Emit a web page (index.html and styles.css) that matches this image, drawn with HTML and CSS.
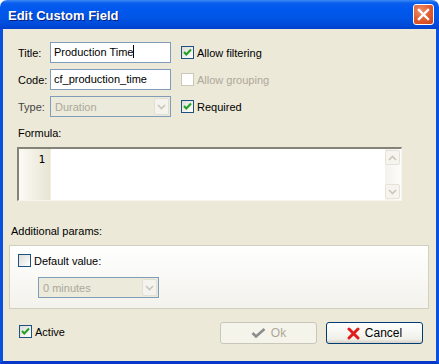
FILE: index.html
```html
<!DOCTYPE html>
<html lang="en">
<head>
    <meta charset="UTF-8">
    <title>Edit Custom Field</title>
    <link rel="stylesheet" href="styles.css">
</head>
<body>

<div class="window">
    <div class="titlebar">
        <span class="title">Edit Custom Field</span>
        <span class="close">
            <svg width="21" height="21" viewBox="0 0 21 21"><path d="M6 6 L15 15 M15 6 L6 15" stroke="#fff" stroke-width="2.4" stroke-linecap="square"/></svg>
        </span>
    </div>

    <div class="content">
        <div class="fields">
            <label>Title:</label>
            <div class="input">Production Time<span class="caret"></span></div>
            <div class="check">
                <span class="cb"><svg width="11" height="11" viewBox="0 0 11 11"><path d="M2 5 L4.3 7.5 L9 2.5" fill="none" stroke="#21A121" stroke-width="2"/></svg></span>
                <span>Allow filtering</span>
            </div>

            <label>Code:</label>
            <div class="input">cf_production_time</div>
            <div class="check disabled">
                <span class="cb"></span>
                <span>Allow grouping</span>
            </div>

            <label class="muted">Type:</label>
            <div class="select">
                <span>Duration</span>
                <span class="drop"><svg width="9" height="6" viewBox="0 0 9 6"><path d="M1 1 L4.5 4.5 L8 1" fill="none" stroke="#C9C7BA" stroke-width="1.6"/></svg></span>
            </div>
            <div class="check">
                <span class="cb"><svg width="11" height="11" viewBox="0 0 11 11"><path d="M2 5 L4.3 7.5 L9 2.5" fill="none" stroke="#21A121" stroke-width="2"/></svg></span>
                <span>Required</span>
            </div>
        </div>

        <div class="formula-label">Formula:</div>
        <div class="editor">
            <div class="gutter">1</div>
            <div class="code"></div>
            <div class="vscroll">
                <span class="sbtn"><svg width="9" height="6" viewBox="0 0 9 6"><path d="M1 5 L4.5 1.5 L8 5" fill="none" stroke="#C9C7BA" stroke-width="1.6"/></svg></span>
                <span class="sbtn"><svg width="9" height="6" viewBox="0 0 9 6"><path d="M1 1 L4.5 4.5 L8 1" fill="none" stroke="#C9C7BA" stroke-width="1.6"/></svg></span>
            </div>
        </div>

        <div class="params-label">Additional params:</div>
        <div class="params-box">
            <div class="check">
                <span class="cb"></span>
                <span>Default value:</span>
            </div>
            <div class="select small">
                <span>0 minutes</span>
                <span class="drop"><svg width="9" height="6" viewBox="0 0 9 6"><path d="M1 1 L4.5 4.5 L8 1" fill="none" stroke="#C9C7BA" stroke-width="1.6"/></svg></span>
            </div>
        </div>

        <div class="footer">
            <div class="check active">
                <span class="cb"><svg width="11" height="11" viewBox="0 0 11 11"><path d="M2 5 L4.3 7.5 L9 2.5" fill="none" stroke="#21A121" stroke-width="2"/></svg></span>
                <span>Active</span>
            </div>
            <div class="buttons">
                <div class="btn disabled">
                    <svg width="15" height="12" viewBox="0 0 15 12"><path d="M1.5 6 L5 9.5 L13.5 2" fill="none" stroke="#8C8C8C" stroke-width="2.6"/></svg>
                    <span>Ok</span>
                </div>
                <div class="btn">
                    <svg width="13" height="13" viewBox="0 0 13 13"><path d="M2 2 L11 11 M11 2 L2 11" stroke="#E11C1C" stroke-width="3" stroke-linecap="round"/></svg>
                    <span>Cancel</span>
                </div>
            </div>
        </div>
    </div>
</div>

</body>
</html>
```

FILE: styles.css
```css
html, body {
    margin: 0;
    padding: 0;
    background-color: #fff;
    font-family: "Liberation Sans", Arial, sans-serif;
    font-size: 11px;
    color: #000;
}
.window {
    width: 439px;
    height: 364px;
    display: flex;
    flex-direction: column;
}
.titlebar {
    height: 29px;
    flex: none;
    border-radius: 7px 7px 0 0;
    background: linear-gradient(#3D8BF5 0, #0A5EEC 3px, #0058EE 8px, #0055E5 18px, #0048D6 26px, #0040CC 29px);
    display: flex;
    align-items: center;
    justify-content: space-between;
    padding: 0 5px 0 8px;
}
.title {
    color: #fff;
    font-weight: bold;
    font-size: 13px;
    text-shadow: 1px 1px 0 #0A1E7A;
    margin-top: 1px;
}
.close {
    width: 21px;
    height: 21px;
    box-sizing: border-box;
    border: 1px solid #fff;
    border-radius: 3px;
    background: radial-gradient(circle at 35% 30%, #F0906A, #E0592E 55%, #C8401A);
    display: flex;
    align-items: center;
    justify-content: center;
}
.close svg {
    margin: -1px;
}
.content {
    flex: 1;
    background-color: #ECE9D8;
    border-left: 3px solid #0850E0;
    border-right: 3px solid #0850E0;
    border-bottom: 3px solid #0738C8;
    padding: 13px 7px 0 6px;
    display: flex;
    flex-direction: column;
}
.fields {
    margin-left: 9px;
    display: grid;
    grid-template-columns: 32px 121px 1fr;
    grid-auto-rows: 21px;
    row-gap: 6px;
    align-items: center;
}
.muted {
    color: #444;
}
.input {
    height: 21px;
    box-sizing: border-box;
    border: 1px solid #7F9DB9;
    background-color: #fff;
    padding: 0 3px;
    line-height: 19px;
    white-space: nowrap;
}
.caret {
    display: inline-block;
    width: 1px;
    height: 13px;
    background-color: #000;
    vertical-align: -2px;
}
.check {
    display: flex;
    align-items: center;
    gap: 3px;
}
.fields .check {
    margin-left: 10px;
}
.cb {
    width: 13px;
    height: 13px;
    box-sizing: border-box;
    border: 1px solid #1C5180;
    background: linear-gradient(135deg, #DCDCD7, #fff);
    display: flex;
    align-items: center;
    justify-content: center;
    flex: none;
}
.check.disabled {
    color: #ACA899;
}
.check.disabled .cb {
    border-color: #CAC8BB;
    background: #fff;
}
.select {
    height: 21px;
    box-sizing: border-box;
    border: 1px solid #7F9DB9;
    background-color: #EBEADB;
    color: #ACA899;
    display: flex;
    align-items: center;
    justify-content: space-between;
    padding: 1px 1px 1px 4px;
}
.drop {
    width: 15px;
    height: 17px;
    box-sizing: border-box;
    border: 1px solid #E2E0D4;
    border-radius: 2px;
    background-color: #F4F3EE;
    display: flex;
    align-items: center;
    justify-content: center;
}
.formula-label {
    margin: 9px 0 7px 9px;
    height: 14px;
    line-height: 14px;
}
.editor {
    margin-left: 8px;
    width: 385px;
    height: 54px;
    box-sizing: border-box;
    border-top: 2px solid #858378;
    border-left: 2px solid #858378;
    border-right: 1px solid #F6F5EF;
    border-bottom: 1px solid #F6F5EF;
    background-color: #fff;
    display: flex;
}
.gutter {
    width: 32px;
    flex: none;
    border-right: 1px solid #F0EEE2;
    background: linear-gradient(90deg, #FBFAF5, #E8E5D4);
    font-family: "DejaVu Sans Mono", monospace;
    font-size: 11px;
    text-align: right;
    padding: 4px 5px 0 0;
    box-sizing: border-box;
    line-height: 13px;
}
.code {
    flex: 1;
}
.vscroll {
    width: 16px;
    flex: none;
    background: linear-gradient(90deg, #F3F2ED, #FDFDFB);
    display: flex;
    flex-direction: column;
    justify-content: space-between;
    padding: 1px 0;
}
.sbtn {
    width: 15px;
    height: 15px;
    box-sizing: border-box;
    border: 1px solid #E5E3D8;
    border-radius: 2px;
    background-color: #F5F4EF;
    display: flex;
    align-items: center;
    justify-content: center;
}
.params-label {
    margin: 23px 0 7px 2px;
    height: 14px;
    line-height: 14px;
}
.params-box {
    width: 420px;
    height: 64px;
    box-sizing: border-box;
    border: 1px solid #D0D0BF;
    background: linear-gradient(#FFFFFF, #F3F2EC);
    padding: 8px 0 0 8px;
}
.select.small {
    width: 121px;
    margin: 10px 0 0 20px;
}
.footer {
    display: flex;
    justify-content: space-between;
    padding: 13px 6px 0 10px;
}
.check.active {
    margin-top: 3px;
    height: 13px;
}
.buttons {
    display: flex;
    gap: 9px;
}
.btn {
    width: 97px;
    height: 22px;
    box-sizing: border-box;
    border: 1px solid #003C74;
    border-radius: 3px;
    background: linear-gradient(#FFFFFF, #F0F0EA 80%, #D6D0C5);
    display: flex;
    align-items: center;
    justify-content: center;
    gap: 5px;
    font-size: 12px;
}
.btn.disabled {
    border-color: #C9C7BA;
    background: #F5F4EA;
    color: #ACA899;
}
```
